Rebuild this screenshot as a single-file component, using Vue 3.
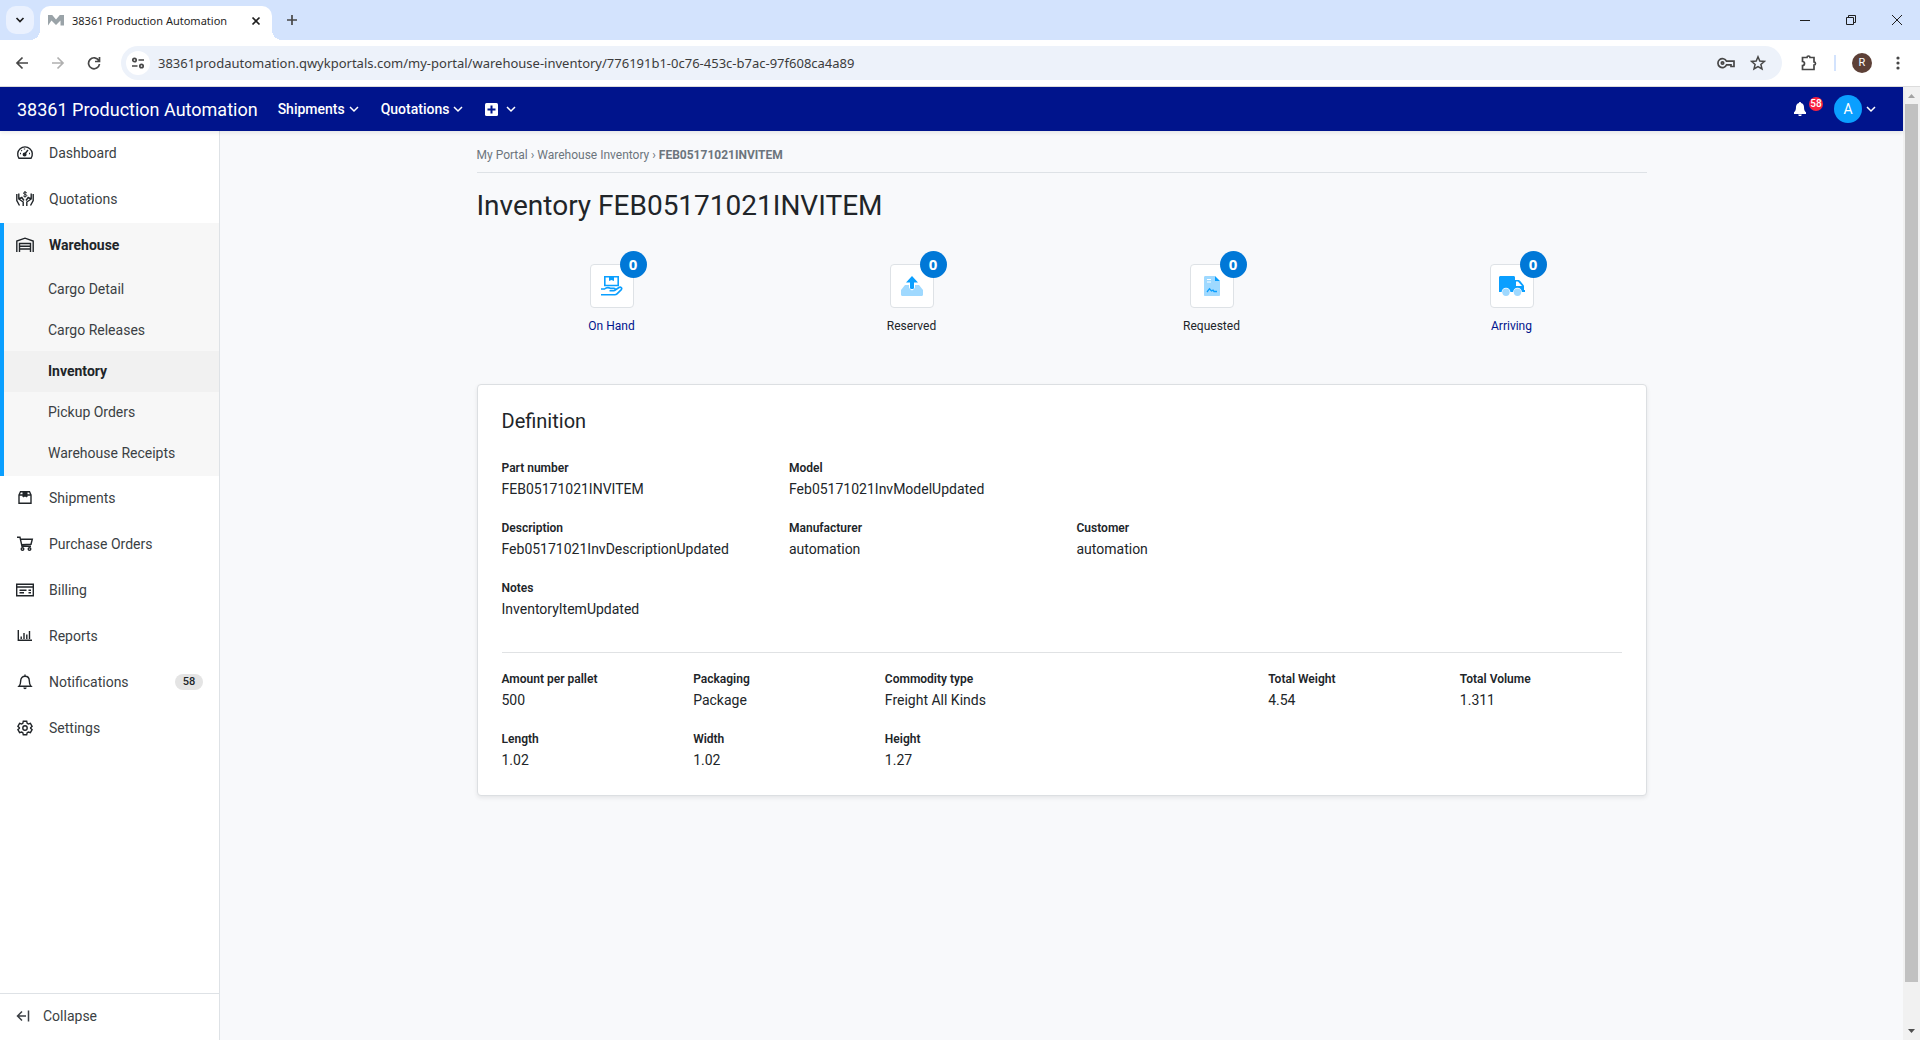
<script setup>
import { ref } from 'vue'

const url = ref('38361prodautomation.qwykportals.com/my-portal/warehouse-inventory/776191b1-0c76-453c-b7ac-97f608ca4a89')

const warehouseLinks = ['Cargo Detail', 'Cargo Releases', 'Inventory', 'Pickup Orders', 'Warehouse Receipts']

const lowerLinks = [
  { label: 'Shipments', icon: 'box' },
  { label: 'Purchase Orders', icon: 'cart' },
  { label: 'Billing', icon: 'bill' },
  { label: 'Reports', icon: 'chart' },
  { label: 'Notifications', icon: 'bell', count: 58 },
  { label: 'Settings', icon: 'gear' },
]

const stats = [
  { label: 'On Hand', count: 0, icon: 'hand', link: true },
  { label: 'Reserved', count: 0, icon: 'upload', link: false },
  { label: 'Requested', count: 0, icon: 'document', link: false },
  { label: 'Arriving', count: 0, icon: 'truck', link: true },
]

const identity = [
  { label: 'Part number', value: 'FEB05171021INVITEM' },
  { label: 'Model', value: 'Feb05171021InvModelUpdated', span: 'rest' },
  { label: 'Description', value: 'Feb05171021InvDescriptionUpdated' },
  { label: 'Manufacturer', value: 'automation' },
  { label: 'Customer', value: 'automation', span: 'two' },
  { label: 'Notes', value: 'InventoryItemUpdated', span: 'full' },
]

const measures = [
  { label: 'Amount per pallet', value: '500' },
  { label: 'Packaging', value: 'Package' },
  { label: 'Commodity type', value: 'Freight All Kinds', span: 'two' },
  { label: 'Total Weight', value: '4.54' },
  { label: 'Total Volume', value: '1.311' },
  { label: 'Length', value: '1.02' },
  { label: 'Width', value: '1.02' },
  { label: 'Height', value: '1.27' },
]
</script>

<template>
  <div class="window">
    <!-- Browser tab strip -->
    <div class="tabs">
      <button class="tab-search" aria-label="Search tabs">
        <svg width="10" height="10" viewBox="0 0 10 10"><path d="M1.500 3l3.500 3.500L8.500 3" class="ln w2" /></svg>
      </button>
      <div class="tab">
        <svg width="16" height="11" viewBox="0 0 16 11"><path d="M0 10.500V0h4.200L8 4.500 11.800 0H16v10.500h-3.500V5.500L8 10 3.500 5.500z" fill="#9aa3a8" /></svg>
        <span class="tab-title">38361 Production Automation</span>
        <button class="icon-btn" aria-label="Close tab">
          <svg width="10" height="10" viewBox="0 0 10 10"><path d="M1.500 1.500l7 7m0-7l-7 7" class="ln w2" /></svg>
        </button>
      </div>
      <button class="icon-btn new-tab" aria-label="New tab">
        <svg width="12" height="12" viewBox="0 0 12 12"><path d="M6 1v10M1 6h10" class="ln w2 grey" /></svg>
      </button>
      <div class="win-controls">
        <button class="icon-btn" aria-label="Minimize"><svg width="12" height="12" viewBox="0 0 12 12"><path d="M1 6.500h10" class="ln" /></svg></button>
        <button class="icon-btn" aria-label="Restore"><svg width="12" height="12" viewBox="0 0 12 12"><path d="M1.500 3.500h7v7h-7zM3.500 3.500v-2h7v7h-2" class="ln" /></svg></button>
        <button class="icon-btn" aria-label="Close"><svg width="12" height="12" viewBox="0 0 12 12"><path d="M1 1l10 10M11 1L1 11" class="ln" /></svg></button>
      </div>
    </div>

    <!-- Browser toolbar -->
    <div class="toolbar">
      <button class="icon-btn" aria-label="Back"><svg width="14" height="14" viewBox="0 0 14 14"><path d="M13 7H2m5.500-5.500L2 7l5.500 5.500" class="ln w2 grey" /></svg></button>
      <button class="icon-btn" aria-label="Forward"><svg width="14" height="14" viewBox="0 0 14 14"><path d="M1 7h11M6.500 1.500L12 7l-5.500 5.500" class="ln w2 pale" /></svg></button>
      <button class="icon-btn" aria-label="Reload"><svg width="14" height="14" viewBox="0 0 14 14"><path d="M11.800 4.500A5.500 5.500 0 1 0 12.500 8M12.500 1v4.500H8" class="ln w2 grey" /></svg></button>
      <div class="omnibox">
        <button class="site-info" aria-label="Site information">
          <svg width="14" height="14" viewBox="0 0 14 14"><g class="ln w2 grey"><circle cx="3.500" cy="4" r="1.700" /><path d="M7.500 4H13M1 10h5.500" /><circle cx="10.500" cy="10" r="1.700" /></g></svg>
        </button>
        <input v-model="url" class="url" aria-label="Address" spellcheck="false" />
        <button class="icon-btn" aria-label="Passwords"><svg width="18" height="12" viewBox="0 0 18 12"><g class="ln w2 grey"><path d="M9.500 4.200H17v5.300h-3V7.800H9.600A4.500 4.500 0 1 1 9.500 4.200z" /><circle cx="5.500" cy="6" r="1.200" /></g></svg></button>
        <button class="icon-btn star" aria-label="Bookmark"><svg width="16" height="16" viewBox="0 0 16 16"><path d="M8 1.800l1.800 4.200 4.600.4-3.500 3 1.100 4.500L8 11.500l-4 2.400 1.100-4.500-3.500-3 4.600-.4z" class="ln grey w15" /></svg></button>
      </div>
      <div class="toolbar-end">
        <button class="icon-btn" aria-label="Extensions"><svg width="18" height="18" viewBox="0 0 18 18"><path d="M2.500 3.500h4.500a1.500 1.500 0 0 1 3 0h4v4.500a1.500 1.500 0 0 1 0 3v4.500H2.500v-4a2 2 0 0 0 0-4z" class="ln w2 grey" /></svg></button>
        <span class="divider"></span>
        <button class="profile" aria-label="Profile">R</button>
        <button class="icon-btn" aria-label="Menu"><svg width="4" height="16" viewBox="0 0 4 16" fill="#474747"><circle cx="2" cy="3" r="1.600" /><circle cx="2" cy="8" r="1.600" /><circle cx="2" cy="13" r="1.600" /></svg></button>
      </div>
    </div>

    <div class="viewport">
      <div class="app">
        <header class="topbar">
          <a class="brand" href="#">38361 Production Automation</a>
          <nav class="topnav">
            <button class="menu-btn">Shipments<svg width="10" height="8" viewBox="0 0 10 8"><path d="M1 2l4 4 4-4" class="ln w15" /></svg></button>
            <button class="menu-btn">Quotations<svg width="10" height="8" viewBox="0 0 10 8"><path d="M1 2l4 4 4-4" class="ln w15" /></svg></button>
            <button class="menu-btn add" aria-label="Create">
              <svg width="13" height="13" viewBox="0 0 13 13"><rect width="13" height="13" rx="1.500" fill="#fff" /><path d="M6.500 2.500v8m-4-4h8" stroke="#00148c" stroke-width="2" /></svg>
              <svg width="10" height="8" viewBox="0 0 10 8"><path d="M1 2l4 4 4-4" class="ln w15" /></svg>
            </button>
          </nav>
          <button class="menu-btn alerts" aria-label="Alerts">
            <svg width="12" height="14" viewBox="0 0 12 14" fill="#fff"><path d="M6 0c.7 0 1 .4 1 1 2 .5 3 2.200 3 4 0 3 .8 4.300 2 5.300V12H0v-1.700C1.200 9.300 2 8 2 5c0-1.800 1-3.500 3-4 0-.6.300-1 1-1zM4.300 12.500h3.400a1.700 1.700 0 0 1-3.400 0z" /></svg>
            <span class="alert-count">58</span>
          </button>
          <button class="menu-btn account" aria-label="Account">
            <span class="avatar">A</span>
            <svg width="10" height="8" viewBox="0 0 10 8"><path d="M1 2l4 4 4-4" class="ln w15" /></svg>
          </button>
        </header>

        <div class="body">
          <aside class="sidebar">
            <nav class="side-nav">
              <a class="nav-item" href="#">
                <svg class="ico" viewBox="0 0 18 18"><path d="M3 14.300A7.300 7.300 0 1 1 15 14.300z" /><path d="M8 11l4-5" /><circle cx="8.600" cy="10.600" r="1.300" fill="currentColor" /><path d="M4 9.500h1M5.300 6.300l.6.600M8.500 4.500v1M13 9.500h1" /></svg>
                <span>Dashboard</span>
              </a>
              <a class="nav-item" href="#">
                <svg class="ico" viewBox="0 0 18 18"><path d="M.8 4v6.500l2.700 5M2.800 3.500V9l4.400 3v4M2.800 9l3-1.500L8 10.500M17.200 4v6.500l-2.700 5M15.200 3.500V9l-4.400 3v4M15.200 9l-3-1.500L10 10.500" /><path d="M10.800 2.800C9 1.800 7.300 2.200 7.500 3.300c.2 1.200 3.200.8 3.300 2.100.1 1.200-2 1.500-3.500.6M9 1v6.600" class="thin" /></svg>
                <span>Quotations</span>
              </a>
              <div class="nav-group">
                <a class="nav-item open" href="#">
                  <svg class="ico" viewBox="0 0 18 18"><path d="M.8 16V5L9 2.200 17.200 5v11M3.500 16V7.500h11V16M3.500 10.300h11M3.500 13h11" /></svg>
                  <span>Warehouse</span>
                </a>
                <a v-for="item in warehouseLinks" :key="item" class="sub-item" :class="{ current: item === 'Inventory' }" href="#">{{ item }}</a>
              </div>
              <a v-for="item in lowerLinks" :key="item.label" class="nav-item" href="#">
                <svg class="ico" viewBox="0 0 18 18">
                  <g v-if="item.icon === 'box'"><path d="M3 6l1.500-3.200h9L15 6v8.300H3zM3 6h12" /><path d="M7 3h4v5L9 7 7 8z" fill="currentColor" stroke-width="1" /></g>
                  <g v-else-if="item.icon === 'cart'"><path d="M1 2.300h3l2 9h9M4.300 4.300H16.300L15 9.300 5.700 9.800" /><circle cx="6.500" cy="14" r="1.300" /><circle cx="13.500" cy="14" r="1.300" /></g>
                  <g v-else-if="item.icon === 'bill'"><path d="M.7 3.200h16.600v11.500H.7zM.7 6h16.600M3.500 9.200h7M3.500 11.800h4.500M12.500 9.200h2.500M12.500 11.800h2.500" /></g>
                  <g v-else-if="item.icon === 'chart'"><path d="M2.300 3v10.300H16M5.200 12V9.500M8 12V6M10.800 12V7.500M13.500 12V4" /></g>
                  <g v-else-if="item.icon === 'bell'"><path d="M3 13.300c1.500-1.500 1.700-3 1.700-5.500C4.700 5 6.500 3.300 9 3.300S13.300 5 13.300 7.800c0 2.500.2 4 1.700 5.500zM9 1.500v2" /><path d="M7.300 14.500h3.400a1.700 1.700 0 0 1-3.400 0z" fill="currentColor" stroke="none" /></g>
                  <g v-else><path d="M7.300 2.300h3.400l.5 2 1.200.7 2-.6 1.700 2.900-1.500 1.500v.4l1.500 1.500-1.700 2.900-2-.6-1.200.7-.5 2H7.300l-.5-2-1.200-.7-2 .6-1.700-2.900 1.500-1.500v-.4L1.900 7.300l1.700-2.900 2 .6 1.200-.7z" /><circle cx="9" cy="9" r="2.200" /></g>
                </svg>
                <span>{{ item.label }}</span>
                <span v-if="item.count" class="pill">{{ item.count }}</span>
              </a>
            </nav>
            <button class="collapse">
              <svg width="14" height="12" viewBox="0 0 14 12"><path d="M10 6H1.500M6 1.500L1.500 6 6 10.500M12.500 .5v11" class="ln w15" /></svg>
              Collapse
            </button>
          </aside>

          <main class="content">
            <div class="container">
              <nav class="breadcrumb" aria-label="Breadcrumb">
                <a href="#">My Portal</a> › <a href="#">Warehouse Inventory</a> › <strong>FEB05171021INVITEM</strong>
              </nav>
              <h1>Inventory FEB05171021INVITEM</h1>

              <div class="stats">
                <component :is="stat.link ? 'a' : 'div'" v-for="stat in stats" :key="stat.label" class="stat" :href="stat.link ? '#' : null">
                  <span class="stat-box">
                    <svg v-if="stat.icon === 'hand'" width="22" height="20" viewBox="0 0 22 20" fill="none" stroke="#0a9fff" stroke-width="1.600">
                      <path d="M3.800.8h13.400v8.700H3.800z" /><path d="M8 1v4l2.500-1L13 5V1" fill="#0a9fff" stroke="none" />
                      <path d="M0 13h3.500c2-1.700 4.500-1.500 6-.6h3.500c1.700 0 1.700 2.300 0 2.300H8.500M13.500 14.500l4.500-3c1.700-1 3.500.6 2.300 2.100l-4.300 4.300c-.6.600-1.200.9-2.200.9H0" />
                    </svg>
                    <svg v-else-if="stat.icon === 'upload'" width="22" height="20" viewBox="0 0 22 20">
                      <path d="M4 9h4v1.500c0 1 .2 1.500 1 2.500l2 1.500 2-1.500c.8-1 1-1.500 1-2.500V9h4l4 5v4.500c0 .9-.5 1.500-1.500 1.500h-19C.5 20 0 19.400 0 18.500V14z" fill="#9fd9ff" />
                      <path d="M11 0l6 6.500h-4V12c0 1.300-4 1.300-4 0V6.500H5z" fill="#0a9fff" />
                    </svg>
                    <svg v-else-if="stat.icon === 'document'" width="16" height="20" viewBox="0 0 16 20">
                      <path d="M1.500 0H11v5h5v14c0 .6-.4 1-1 1H1c-.6 0-1-.4-1-1V1.500C0 .5.5 0 1.500 0z" fill="#9fd9ff" /><path d="M11 0l5 5h-5z" fill="#0a9fff" />
                      <path d="M3 3.500h4M3 6h4" stroke="#fff" /><path d="M3 16l2.500-3.300L7.500 15l1.500-.8 1 1.300h3" fill="none" stroke="#0a9fff" stroke-width="1.300" />
                    </svg>
                    <svg v-else width="26" height="20" viewBox="0 0 26 20">
                      <path d="M1.500 0h13C15.500 0 16 .6 16 1.500V4h3c1 0 1.500.3 2 .8L24.500 9c.5.6.5 1 .5 1.500V14h1v2H0V1.500C0 .6.6 0 1.500 0z" fill="#0a9fff" /><path d="M17 5.500h2l4 4.500h-6z" fill="#fff" />
                      <circle cx="7" cy="16.200" r="4.400" fill="#fff" /><circle cx="18.500" cy="16.200" r="4.400" fill="#fff" /><circle cx="7" cy="16.200" r="3.700" fill="#9fd9ff" /><circle cx="18.500" cy="16.200" r="3.700" fill="#9fd9ff" />
                    </svg>
                    <span class="stat-count">{{ stat.count }}</span>
                  </span>
                  <span>{{ stat.label }}</span>
                </component>
              </div>

              <section class="card">
                <h2>Definition</h2>
                <dl class="fields four">
                  <div v-for="field in identity" :key="field.label" :class="field.span">
                    <dt>{{ field.label }}</dt>
                    <dd>{{ field.value }}</dd>
                  </div>
                </dl>
                <hr />
                <dl class="fields six">
                  <div v-for="field in measures" :key="field.label" :class="field.span">
                    <dt>{{ field.label }}</dt>
                    <dd>{{ field.value }}</dd>
                  </div>
                </dl>
              </section>
            </div>
          </main>
        </div>
      </div>

      <div class="scrollbar" aria-hidden="true">
        <svg width="17" height="17" viewBox="0 0 17 17"><path d="M5 11l3.500-4 3.500 4z" fill="#a3a3a3" /></svg>
        <div class="track"><div class="thumb"></div></div>
        <svg width="17" height="17" viewBox="0 0 17 17"><path d="M5 6l3.500 4L12 6z" fill="#505050" /></svg>
      </div>
    </div>
  </div>
</template>

<style>
body {
  margin: 0;
}
</style>

<style scoped>
* {
  box-sizing: border-box;
}
a {
  color: inherit;
  text-decoration: none;
}
button {
  padding: 0;
  border: 0;
  background: none;
  color: inherit;
  font: inherit;
}
svg {
  flex: none;
}
.ln {
  fill: none;
  stroke: currentColor;
}
.w15 {
  stroke-width: 1.5;
}
.w2 {
  stroke-width: 1.7;
}
.grey {
  stroke: #474747;
}
.pale {
  stroke: #b0b0b0;
}
.window {
  display: flex;
  flex-direction: column;
  min-height: 100vh;
  font-family: Roboto, "Liberation Sans", sans-serif;
  font-size: 14px;
  color: #212529;
}

/* Browser chrome */
.tabs {
  display: flex;
  align-items: center;
  height: 40px;
  padding-left: 6px;
  background: #d3e3fd;
  font-family: "Noto Sans", "Open Sans", sans-serif;
  color: #1f1f1f;
}
.icon-btn {
  display: flex;
  align-items: center;
  justify-content: center;
}
.tab-search {
  display: flex;
  align-items: center;
  justify-content: center;
  width: 28px;
  height: 28px;
  border-radius: 10px;
  background: #eaf1fe;
}
.tab {
  position: relative;
  display: flex;
  align-items: center;
  align-self: flex-end;
  width: 232px;
  height: 34px;
  margin-left: 6px;
  padding: 0 11px 5px 8px;
  border-radius: 10px 10px 0 0;
  background: #fff;
}
.tab::before,
.tab::after {
  content: "";
  position: absolute;
  bottom: 0;
  width: 10px;
  height: 10px;
}
.tab::before {
  right: 100%;
  background: radial-gradient(circle at 0 0, transparent 10px, #fff 10px);
}
.tab::after {
  left: 100%;
  background: radial-gradient(circle at 100% 0, transparent 10px, #fff 10px);
}
.tab-title {
  flex: 1;
  margin-left: 8px;
  font-size: 11px;
  white-space: nowrap;
}
.new-tab {
  margin-left: 14px;
}
.win-controls {
  display: flex;
  gap: 34px;
  margin-left: auto;
  padding-right: 17px;
}
.toolbar {
  display: flex;
  align-items: center;
  gap: 22px;
  height: 47px;
  padding: 0 20px 1px 15px;
  border-bottom: 1px solid #dcdcdc;
  background: #fff;
}
.omnibox {
  display: flex;
  flex: 1;
  align-items: center;
  height: 34px;
  margin-left: -2px;
  padding: 0 16px 0 5px;
  border-radius: 17px;
  background: #edf2fa;
}
.site-info {
  display: flex;
  align-items: center;
  justify-content: center;
  width: 24px;
  height: 24px;
  border-radius: 12px;
  background: #fff;
}
.url {
  flex: 1;
  min-width: 0;
  margin-left: 8px;
  padding: 0;
  border: 0;
  outline: 0;
  background: none;
  font: 13px "Noto Sans", "Open Sans", sans-serif;
  color: #3c3c3c;
}
.star {
  margin-left: 15px;
}
.toolbar-end {
  display: flex;
  align-items: center;
}
.toolbar-end .divider {
  width: 2px;
  height: 16px;
  margin: 0 16px;
  background: #d3e3fd;
}
.profile {
  width: 20px;
  height: 20px;
  margin-right: 24px;
  border-radius: 10px;
  background: #5d4037;
  color: #fff;
  font-size: 11px;
}
.toolbar-end .icon-btn:first-child {
  margin-left: -4px;
}

/* Portal page */
.viewport {
  display: flex;
  flex: 1;
}
.app {
  display: flex;
  flex: 1;
  flex-direction: column;
  min-width: 0;
}
.topbar {
  position: relative;
  display: flex;
  align-items: center;
  height: 44px;
  padding: 0 27px 0 17px;
  background: #00148c;
  box-shadow: 0 2px 4px rgba(0, 0, 0, 0.08);
  color: #fff;
}
.brand {
  font-size: 18px;
}
.topnav {
  display: flex;
  gap: 22px;
  margin-left: 20px;
}
.menu-btn {
  display: flex;
  align-items: center;
  gap: 4px;
  font-weight: 500;
}
.add {
  gap: 8px;
}
.alerts {
  gap: 3px;
  margin-left: auto;
}
.alert-count {
  align-self: flex-start;
  width: 14px;
  height: 14px;
  margin-bottom: 10px;
  border-radius: 7px;
  background: #fa2340;
  font-size: 10px;
  line-height: 14px;
  text-align: center;
}
.account {
  margin-left: 11px;
}
.avatar {
  width: 28px;
  height: 28px;
  border-radius: 14px;
  background: #0a9fff;
  font-weight: 400;
  line-height: 28px;
}
.body {
  display: flex;
  flex: 1;
}
.sidebar {
  display: flex;
  flex-direction: column;
  justify-content: space-between;
  width: 220px;
  border-right: 1px solid #dee2e6;
  background: #fff;
  color: #3b3f44;
}
.nav-item {
  display: flex;
  align-items: center;
  height: 46px;
  padding: 0 16px 2px;
}
.ico {
  width: 18px;
  height: 18px;
  margin-right: 15px;
  fill: none;
  stroke: currentColor;
  stroke-width: 1.4;
  color: #212529;
}
.thin {
  stroke-width: 1;
}
.nav-group {
  padding-bottom: 2px;
  background: #f7f7f7;
  box-shadow: inset 4px 0 #0a9fff;
}
.open,
.current {
  font-weight: 700;
  color: #212529;
}
.sub-item {
  display: block;
  height: 41px;
  margin-left: 4px;
  padding-left: 44px;
  line-height: 41px;
}
.current {
  background: #f1f1f1;
}
.pill {
  width: 28px;
  height: 16px;
  margin-left: auto;
  border-radius: 8px;
  background: #e4e4e4;
  color: #212529;
  font-size: 11px;
  font-weight: 500;
  line-height: 16px;
  text-align: center;
}
.collapse {
  display: flex;
  align-items: center;
  gap: 13px;
  height: 47px;
  padding: 0 0 3px 16px;
  border-top: 1px solid #dee2e6;
}
.content {
  flex: 1;
  padding: 0 15px;
  background: #f8f9fb;
}
.container {
  max-width: 1170px;
  margin: 0 auto;
}
.breadcrumb {
  height: 42px;
  padding-top: 14px;
  border-bottom: 1px solid #dee2e6;
  color: #6c757d;
  font-size: 12px;
  line-height: 20px;
}
h1 {
  margin: 16px 0 0;
  font-size: 28px;
  font-weight: 400;
  line-height: 34px;
}
.stats {
  display: grid;
  grid-template-columns: repeat(4, 1fr);
  margin: 41px -15px 0;
  font-size: 12px;
  line-height: 18px;
}
.stat {
  display: flex;
  flex-direction: column;
  align-items: center;
  gap: 9px;
}
a.stat {
  color: #00148c;
}
.stat-box {
  position: relative;
  display: flex;
  align-items: center;
  justify-content: center;
  width: 44px;
  height: 44px;
  border: 1px solid #dee2e6;
  border-radius: 4px;
  background: #fff;
}
.stat-count {
  position: absolute;
  top: -14px;
  right: -14px;
  width: 27px;
  height: 27px;
  border-radius: 14px;
  background: #0078d7;
  color: #fff;
  font-family: "Open Sans", "Noto Sans", sans-serif;
  font-size: 15px;
  font-weight: 700;
  line-height: 27px;
  text-align: center;
}
.card {
  margin-top: 49px;
  padding: 24px;
  border: 1px solid #dcdfe2;
  border-radius: 4px;
  background: #fff;
  box-shadow: 0 2px 4px rgba(0, 0, 0, 0.08);
}
h2 {
  margin: 0 0 25px;
  font-size: 20px;
  font-weight: 400;
  line-height: 24px;
}
.fields {
  display: grid;
  row-gap: 18px;
  margin: 0 -30px 0 0;
}
.four {
  grid-template-columns: repeat(4, 1fr);
}
.six {
  grid-template-columns: repeat(6, 1fr);
}
.two {
  grid-column: span 2;
}
.rest {
  grid-column: span 3;
}
.full {
  grid-column: 1 / -1;
}
dt {
  font-size: 12px;
  font-weight: 600;
  line-height: 21px;
}
dd {
  margin: 0;
  line-height: 21px;
}
hr {
  height: 1px;
  margin: 32px 0 16px;
  border: 0;
  background: #e0e2e4;
}

/* Page scrollbar */
.scrollbar {
  display: flex;
  flex-direction: column;
  width: 17px;
  background: #f1f1f1;
}
.track {
  flex: 1;
  padding: 0 2px;
}
.thumb {
  height: calc(100% - 41px);
  background: #c1c1c1;
}
</style>
